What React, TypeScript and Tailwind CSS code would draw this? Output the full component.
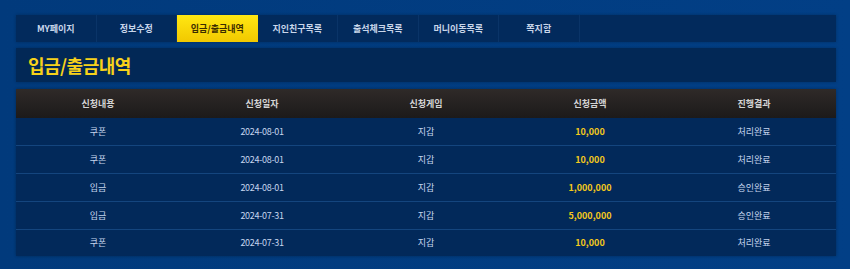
import React from "react";

const tabs = ["MY페이지", "정보수정", "입금/출금내역", "지인친구목록", "출석체크목록", "머니이동목록", "쪽지함"];

const rows = [
  { type: "쿠폰", date: "2024-08-01", game: "지갑", amount: "10,000", result: "처리완료" },
  { type: "쿠폰", date: "2024-08-01", game: "지갑", amount: "10,000", result: "처리완료" },
  { type: "입금", date: "2024-08-01", game: "지갑", amount: "1,000,000", result: "승인완료" },
  { type: "입금", date: "2024-07-31", game: "지갑", amount: "5,000,000", result: "승인완료" },
  { type: "쿠폰", date: "2024-07-31", game: "지갑", amount: "10,000", result: "처리완료" },
];

const headers = ["신청내용", "신청일자", "신청게임", "신청금액", "진행결과"];

export default function App() {
  return (
    <div
      className="w-[850px] h-[269px] bg-gradient-to-r from-[#013a7c] to-[#023f86] pt-[15px] pl-4 overflow-hidden"
      style={{ fontFamily: '"Noto Sans CJK KR", "Noto Sans", sans-serif' }}
    >
      <div className="w-[820px]">
        {/* tabs */}
        <div className="flex h-[27px] bg-[#022a5c] shadow-[0_0_3px_rgba(0,0,0,0.25)]">
          {tabs.map((t, i) => (
            <div
              key={t}
              className={
                i === 2
                  ? "w-[80.5px] flex items-center justify-center whitespace-nowrap text-[9px] font-bold text-[#3b2c00] bg-gradient-to-b from-[#ffe812] to-[#f2c800]"
                  : "w-[80.5px] flex items-center justify-center whitespace-nowrap text-[9px] font-bold text-[#c9d6ea] border-r border-[#0a3468]"
              }
            >
              {t}
            </div>
          ))}
        </div>

        {/* title */}
        <div className="mt-[6px] h-[34px] bg-[#022856] flex items-center pl-3 shadow-[0_0_3px_rgba(0,0,0,0.25)]">
          <span className="text-[18px] font-bold text-[#f7d21a] leading-none tracking-[-0.5px]">입금/출금내역</span>
        </div>

        {/* table */}
        <div className="mt-[7px] shadow-[0_0_3px_rgba(0,0,0,0.3)]">
          <div className="grid grid-cols-5 h-[29px] bg-gradient-to-b from-[#2f2a28] to-[#1c1a1a]">
            {headers.map((h) => (
              <div key={h} className="flex items-center justify-center text-[9px] font-bold text-[#d4d4d4]">
                {h}
              </div>
            ))}
          </div>
          {rows.map((r, i) => (
            <div
              key={i}
              className={
                i < rows.length - 1
                  ? "grid grid-cols-5 h-[28px] bg-[#02295a] border-b border-[#14457e] text-[9px] text-[#c6d6ee]"
                  : "grid grid-cols-5 h-[26px] bg-[#02295a] text-[9px] text-[#c6d6ee]"
              }
            >
              <div className="flex items-center justify-center">{r.type}</div>
              <div className="flex items-center justify-center tracking-[-0.3px]">{r.date}</div>
              <div className="flex items-center justify-center">{r.game}</div>
              <div className="flex items-center justify-center font-bold text-[#f4c81c]">{r.amount}</div>
              <div className="flex items-center justify-center">{r.result}</div>
            </div>
          ))}
        </div>
      </div>
    </div>
  );
}
